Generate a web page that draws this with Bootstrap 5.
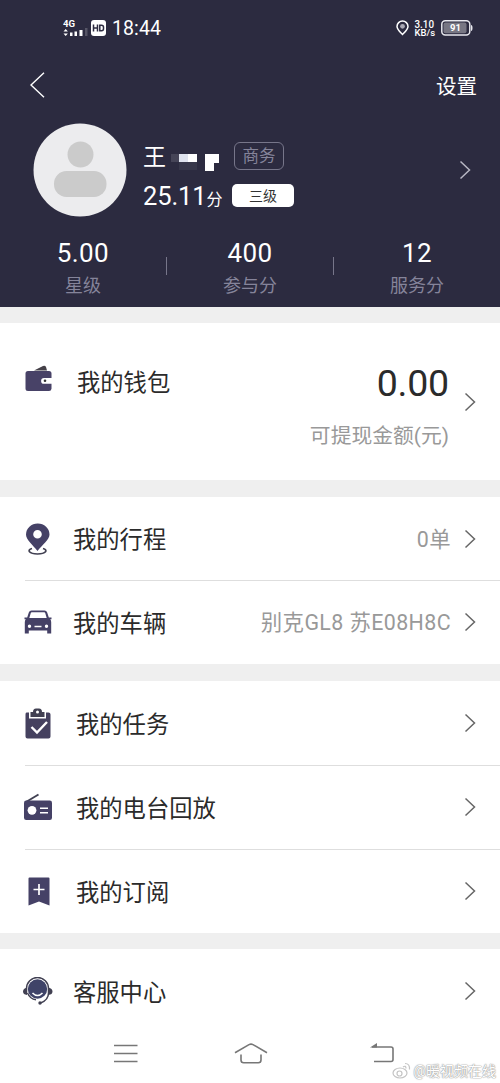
<!DOCTYPE html>
<html lang="zh-CN">
<head>
<meta charset="utf-8">
<meta name="viewport" content="width=device-width, initial-scale=1">
<title>个人中心</title>
<link href="https://cdn.jsdelivr.net/npm/bootstrap@5.3.0/dist/css/bootstrap.min.css" rel="stylesheet">
<style>
  body{font-family:Roboto,"Noto Sans CJK SC",sans-serif;background:#fff;color:#2b2b2b;line-height:1;height:1083px;overflow:hidden}
  svg{display:block;flex:none}
  .profile{background:#2c2b40;color:#fff;height:307px}
  .statusbar{height:56px;padding:0 27px 0 63px}
  .clock{font-size:19.5px;letter-spacing:.1px;margin-left:6px;padding-top:1px}
  .topbar{height:58px;padding:0 23px 0 30px}
  .settings{font-size:20.5px;padding-top:4px}
  .person{height:110px;padding:2px 29px 0 33px}
  .avatar{width:94px;height:94px}
  .surname{font-size:23px;width:23px}
  .tag{width:50px;height:28px;border:1px solid #77768a;border-radius:6px;font-size:16.5px;color:#85849a;padding-top:3px}
  .level{width:62px;height:23px;border-radius:5px;background:#fff;color:#333;font-size:14px;padding-top:2px}
  .score{font-size:25.5px;width:77px;padding-top:4px;letter-spacing:-.1px}
  .score span{font-size:16px}
  .stats{height:83px;padding-top:16px}
  .stat-value{font-size:26px;letter-spacing:.4px;height:27px;line-height:27px}
  .stat-name{font-size:18px;color:#85849a;height:20px;line-height:20px;margin-top:9px}
  .rule{width:1px;height:18px;background:#77768a;margin-top:17px}
  .gap-band{height:17px;background:#efefef}
  .entry{height:84px;padding:0 24px}
  .entry+.entry::before{content:"";position:absolute;left:25px;right:0;top:0;height:1px;background:#dedede}
  .pic{width:28px}
  .name{font-size:23.3px;white-space:nowrap;padding-top:5px}
  .value{font-size:21.4px;letter-spacing:.4px;color:#999;margin-right:13px;white-space:nowrap;padding-top:2px}
  .wallet{height:157px;padding:0 24px}
  .amount{font-size:37.5px;height:38px;line-height:38px;letter-spacing:-.2px}
  .amount-note{font-size:20.8px;color:#999;margin-top:24px}
  .softkeys{height:50px}
  .watermark{position:absolute;right:4px;bottom:3px;font-size:14px;color:#fff;text-shadow:0 0 1px #999,0 0 1px #999,0 0 2px #bbb}
</style>
</head>
<body>
<svg width="0" height="0" class="position-absolute">
  <symbol id="next" viewBox="0 0 12 20"><path d="M1.500 1.500 10.500 10 1.500 18.500" fill="none" stroke="currentColor" stroke-width="1.500"/></symbol>
</svg>
<header class="profile">
  <div class="statusbar d-flex align-items-center">
    <svg width="25" height="18" viewBox="0 0 25 18" fill="#fff"><text x="0" y="7.500" font-size="8.800" font-weight="700" textLength="12" lengthAdjust="spacingAndGlyphs">4G</text><path d="M.5 12.500 2.700 10l2.200 2.500zM.5 14.500l2.200 2.500 2.200-2.500zM7 13.500h2.500V17H7zM11.500 12.500H14V17h-2.500zM16.500 11H19.500v6H16.500z"/><path d="M22 9h2.500v8H22z" opacity=".2"/></svg>
    <svg width="15" height="16" viewBox="0 0 15 16" style="margin-left:3px"><rect width="15" height="16" rx="3" fill="#fff"/><path d="M2.500 4.500v7M6.500 4.500v7M2.500 8h4M8.800 5.200H10.500q2 0 2 2v1.600q0 2-2 2H8.800z" fill="none" stroke="#2c2b40" stroke-width="1.500"/></svg>
    <span class="clock">18:44</span>
    <svg class="ms-auto" width="13" height="16" viewBox="0 0 13 16"><path d="M6.500 14.500C4 12 1 9.500 1 6.500a5.500 5.500 0 0 1 11 0c0 3-3 5.500-5.500 8z" fill="none" stroke="#fff" stroke-width="1.500"/><circle cx="6.500" cy="6.300" r="2.400" fill="#aaa9b4"/></svg>
    <svg width="22" height="19" viewBox="0 0 22 19" fill="#fff" font-weight="500" style="margin-left:5px"><text x="0.500" y="8.500" font-size="10" textLength="19.500" lengthAdjust="spacingAndGlyphs">3.10</text><text x="0.500" y="17" font-size="8.500" textLength="20.500" lengthAdjust="spacingAndGlyphs">KB/s</text></svg>
    <svg width="32" height="16" viewBox="0 0 32 16" style="margin-left:5px"><rect x=".8" y=".8" width="28" height="14.200" rx="3.500" fill="none" stroke="#e8e8ee" stroke-width="1.500"/><rect x="2.500" y="2.500" width="23" height="10.800" rx="2" fill="#777683"/><path d="M30 5q1.500 0 1.500 3T30 11z" fill="#e8e8ee"/><text x="14.500" y="11.300" font-size="9.500" font-weight="700" text-anchor="middle" fill="#fff">91</text></svg>
  </div>
  <div class="topbar d-flex align-items-center justify-content-between">
    <svg width="16" height="26" viewBox="0 0 16 26"><path d="M14 .8 1 13l13 12.200" fill="none" stroke="#fff" stroke-width="1.400"/></svg>
    <span class="settings">设置</span>
  </div>
  <div class="person d-flex align-items-center">
    <svg class="avatar" viewBox="0 0 94 94"><circle cx="47" cy="47" r="46.500" fill="#ececee"/><circle cx="47.500" cy="31.500" r="13" fill="#cbcbcb"/><rect x="21" y="48" width="52.500" height="26" rx="12.500" fill="#cbcbcb"/></svg>
    <div style="margin-left:16px">
      <div class="d-flex align-items-center" style="height:28px;margin-top:10px">
        <span class="surname" style="padding-top:3px">王</span>
        <svg width="53" height="18" viewBox="0 0 53 18" style="margin:13px 15px 0 0"><path d="M5 0h8v8H5z" fill="#454457"/><path d="M13 0h9v8h-9z" fill="#dfe3ee"/><path d="M22 0h9v8h-9z" fill="#fff"/><path d="M13 8h18v8H13z" fill="#37374a"/><path d="M39 0h18v9h-9v8h-9z" fill="#fff"/></svg>
        <span class="tag d-flex align-items-center justify-content-center">商务</span>
      </div>
      <div class="d-flex align-items-center" style="margin-top:12px;height:26px">
        <span class="score text-nowrap">25.11<span>分</span></span>
        <span class="level d-flex align-items-center justify-content-center" style="margin-left:12px">三级</span>
      </div>
    </div>
    <svg class="ms-auto" width="12" height="20" style="color:#b8b7c4"><use href="#next"/></svg>
  </div>
  <div class="stats d-flex text-center">
    <div style="width:166px"><div class="stat-value">5.00</div><div class="stat-name">星级</div></div>
    <div class="rule"></div>
    <div style="width:166px"><div class="stat-value">400</div><div class="stat-name">参与分</div></div>
    <div class="rule"></div>
    <div style="width:166px"><div class="stat-value">12</div><div class="stat-name">服务分</div></div>
  </div>
</header>
<div class="gap-band" style="height:16px"></div>
<section class="wallet d-flex">
  <svg class="pic" height="28" viewBox="0 0 28 28" style="margin-top:42px"><path d="M10 5.500 19 1q2-1 3 1l1 3.500z" fill="#454148"/><path d="M4 6h21a2.500 2.500 0 0 1 2.500 2.500V13H20a2.800 2.800 0 0 0 0 5.800h7.500v5A2.500 2.500 0 0 1 25 26H4a2.500 2.500 0 0 1-2.500-2.500v-15A2.500 2.500 0 0 1 4 6z" fill="#484267"/><circle cx="21" cy="15.800" r="1.300" fill="#333"/></svg>
  <span class="name" style="margin:44px 0 0 25px">我的钱包</span>
  <div class="ms-auto text-end" style="padding-top:41px"><div class="amount">0.00</div><div class="amount-note">可提现金额(元)</div></div>
  <svg width="12" height="20" style="margin:69px 0 0 15px;color:#666"><use href="#next"/></svg>
</section>
<div class="gap-band"></div>
<section>
  <div class="entry position-relative d-flex align-items-center" style="height:83px">
    <svg class="pic" height="32" viewBox="0 0 28 32"><path d="M8 25.500C2.500 27 5 31 13.500 31s11-4 5.500-5.500" fill="none" stroke="#414052" stroke-width="1.700"/><path fill-rule="evenodd" d="M13.500 28C9 22 2 17 2 11.500a11.700 11 0 0 1 23.500 0C25.500 17 18 22 13.500 28zM13.500 7a4.300 4.300 0 1 0 0 8.600 4.300 4.300 0 0 0 0-8.600z" fill="#454166"/></svg>
    <span class="name" style="margin-left:21px">我的行程</span><span class="value ms-auto">0单</span>
    <svg width="12" height="20" style="color:#666"><use href="#next"/></svg>
  </div>
  <div class="entry position-relative d-flex align-items-center">
    <svg class="pic" height="24" viewBox="0 0 28 24"><path fill-rule="evenodd" d="M7.500.5h13q2 0 2.700 2l1.600 5H27.500v1.700h-1.300q1 1 1 3V23.500h-4V20.500H4.800v3h-4V12.200q0-2 1-3H.5V7.500h2.700l1.600-5q.7-2 2.700-2zM7.800 2.300Q7 2.300 6.700 3.200L5.300 8h17.400l-1.400-4.800q-.3-.9-1.100-.9zM5.500 14.500a1.700 1.700 0 1 0 0 3.400 1.700 1.700 0 0 0 0-3.400zM22.500 14.500a1.700 1.700 0 1 0 0 3.400 1.700 1.700 0 0 0 0-3.400zM10.500 15.800v1.500h7v-1.500z" fill="#454166"/></svg>
    <span class="name" style="margin-left:21px">我的车辆</span><span class="value ms-auto">别克GL8 苏E08H8C</span>
    <svg width="12" height="20" style="color:#666"><use href="#next"/></svg>
  </div>
</section>
<div class="gap-band"></div>
<section>
  <div class="entry position-relative d-flex align-items-center">
    <svg class="pic" height="31" viewBox="0 0 28 31"><path d="M2.500 4.500H5v6h17v-6h2.500q2 0 2 2v22q0 2-2 2h-21q-2 0-2-2v-22q0-2 1-2z" fill="#45415f"/><path fill-rule="evenodd" d="M6.500 4H9q0-3.500 3-3.500h3q3 0 3 3.500h2.500v5h-14zM13.500 2.500a1.500 1.500 0 1 0 0 3 1.500 1.500 0 0 0 0-3z" fill="#414052"/><path d="m7.500 19 5.500 5.500L23 14" fill="none" stroke="#fff" stroke-width="2.400"/></svg>
    <span class="name" style="margin-left:24px">我的任务</span>
    <svg class="ms-auto" width="12" height="20" style="color:#666"><use href="#next"/></svg>
  </div>
  <div class="entry position-relative d-flex align-items-center">
    <svg class="pic" height="28" viewBox="0 0 28 28"><path d="M2 9 14.500 1.500" fill="none" stroke="#414052" stroke-width="1.900"/><rect y="7.500" width="28" height="19.500" rx="2.200" fill="#454166"/><circle cx="8" cy="17.300" r="4.400" fill="#fff"/><path d="M16 15.200h8M16 19.700h8" stroke="#fff" stroke-width="1.500"/></svg>
    <span class="name" style="margin-left:24px">我的电台回放</span>
    <svg class="ms-auto" width="12" height="20" style="color:#666"><use href="#next"/></svg>
  </div>
  <div class="entry position-relative d-flex align-items-center">
    <svg class="pic" height="29" viewBox="0 0 28 29"><path d="M5.500.5h19q1 0 1 1v27l-10.500-4-10.500 4v-27q0-1 1-1z" fill="#454166"/><path d="M9.500 12.500h11M15 7v11" stroke="#fff" stroke-width="1.700"/></svg>
    <span class="name" style="margin-left:24px">我的订阅</span>
    <svg class="ms-auto" width="12" height="20" style="color:#666"><use href="#next"/></svg>
  </div>
</section>
<div class="gap-band" style="height:16px"></div>
<section>
  <div class="entry position-relative d-flex align-items-center" style="padding-left:23px">
    <svg width="30" height="28" viewBox="0 0 30 28"><circle cx="14.500" cy="12" r="9.700" fill="#3f4368"/><path d="M3.500 16V11.500a11 11 0 0 1 22 0V16q0 7-8 10" fill="none" stroke="#414052" stroke-width="1.500"/><path d="M4 10.500q-4 1-4 4t4 3.500zM25.500 10.500q4 1 4 4t-4 3.500z" fill="#414052"/><path d="M9.500 16q5 5 10 0" fill="none" stroke="#fff" stroke-width="1.600"/><path d="M4.500 16q2.500 6 8.500 6.800" fill="none" stroke="#414052" stroke-width="1.400"/><circle cx="17" cy="26" r="1.700" fill="#414052"/></svg>
    <span class="name" style="margin-left:20px">客服中心</span>
    <svg class="ms-auto" width="12" height="20" style="color:#666"><use href="#next"/></svg>
  </div>
</section>
<nav class="softkeys position-relative">
  <div class="d-flex" style="padding:7px 0 0 114px">
    <svg width="24" height="24" viewBox="0 0 24 24"><path d="M0 5.500h23.500M0 13.500h23.500M0 21.500h23.500" stroke="#777" stroke-width="1.500"/></svg>
    <svg width="34" height="24" viewBox="0 0 34 24" fill="none" stroke="#777" stroke-width="1.600" style="margin-left:96px"><path d="M1 12.800 15 4.600q2-1 4 0l14 8.200M7 14.500V20q0 2.700 2.700 2.700h14.600Q27 22.700 27 20v-5.500"/></svg>
    <svg width="24" height="24" viewBox="0 0 24 24" style="margin-left:102px"><path d="M2 7h19q2 0 2 2v10.500q0 2-2 2H4" fill="none" stroke="#777" stroke-width="1.600"/><path d="M0 7.500 7 3v4.500z" fill="#777"/></svg>
  </div>
  <div class="watermark d-flex align-items-center">
    <svg width="19" height="18" viewBox="0 0 19 18" fill="none" stroke="#c4c4c4" stroke-width="1.200"><ellipse cx="8" cy="11" rx="7" ry="5"/><circle cx="7.500" cy="11.500" r="2.500"/><path d="M11 5q3-2 3 1.500M13 1.500q5 0 4.500 6"/></svg>
    <span style="margin-left:2px">@暖视频在线</span>
  </div>
</nav>
<script src="https://cdn.jsdelivr.net/npm/bootstrap@5.3.0/dist/js/bootstrap.bundle.min.js"></script>
</body>
</html>
